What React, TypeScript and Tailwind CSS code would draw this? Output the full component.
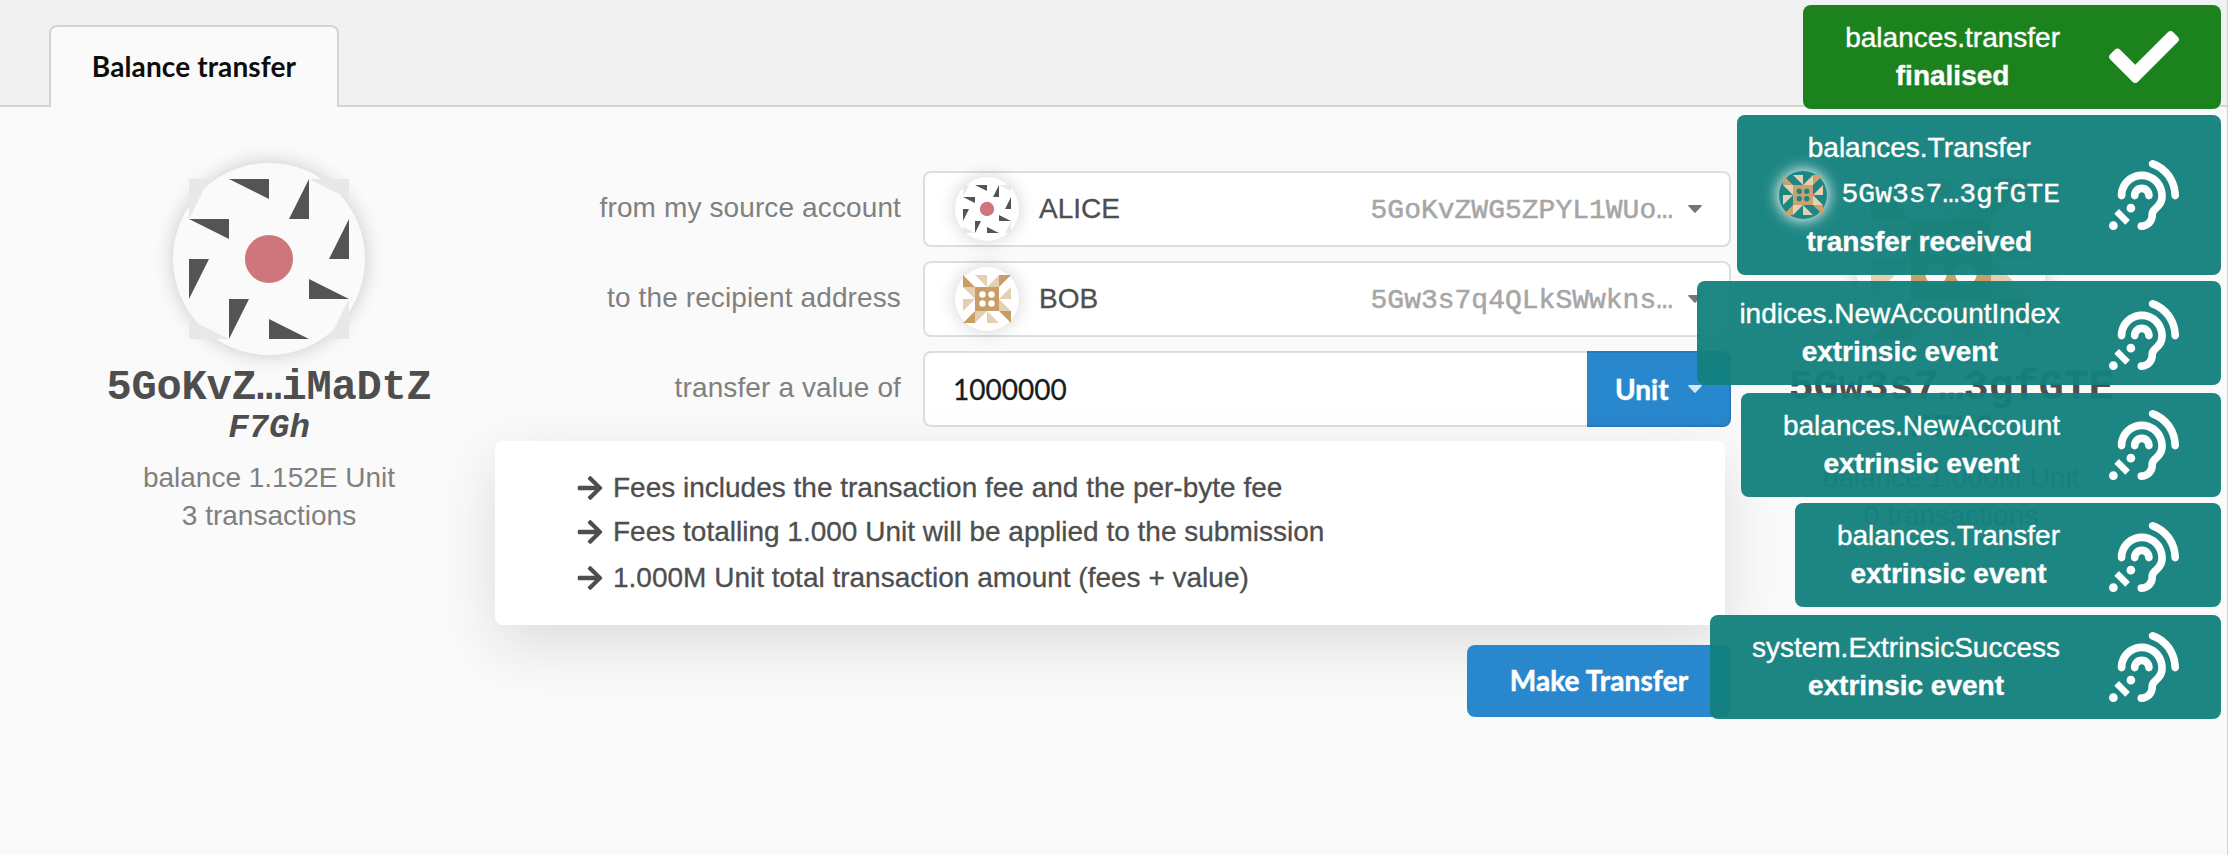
import React from "react";
import { FaArrowRight, FaAssistiveListeningSystems, FaCheck } from "react-icons/fa";

const SANS = "font-['Liberation_Sans',Arial,sans-serif]";
const MONO = "font-['Liberation_Mono','Courier_New',monospace]";
const LATO = "font-['Lato',sans-serif]";

function AliceGlyph({ className }: { className: string }) {
  return (
    <svg viewBox="0 0 160 160" className={className}>
      <path
        fill="#e8e8e8"
        d="M0 0H20L0 40ZM120 0H160V20ZM160 120V160H140ZM40 160H0V140Z"
      />
      <path
        fill="#545454"
        d="M40 0H80V20ZM120 0V40H100ZM0 40H40V60ZM160 40V80H140ZM0 80H20L0 120ZM120 100L160 120H120ZM40 120H60L40 160ZM80 140L120 160H80Z"
      />
      <circle cx="80" cy="80" r="24" fill="#cf767d" />
    </svg>
  );
}

function BobGlyph({ className }: { className: string }) {
  return (
    <svg viewBox="0 0 48 48" className={className}>
      <path
        fill="#e5ceb2"
        d="M12 0H24V12ZM48 12V24H36ZM36 48H24V36ZM0 36V24H12ZM24 12L36 0V12ZM36 24L48 36H36ZM24 36L12 48V36ZM12 24L0 12H12Z"
      />
      <path
        fill="#c99d66"
        fillRule="evenodd"
        d="M36 0H48L36 12ZM48 36V48L36 36ZM12 48H0L12 36ZM0 12V0L12 12ZM12 12H36V36H12ZM16.3 19.5a3.2 3.2 0 1 0 6.4 0a3.2 3.2 0 1 0 -6.4 0ZM25.3 19.5a3.2 3.2 0 1 0 6.4 0a3.2 3.2 0 1 0 -6.4 0ZM16.3 28.5a3.2 3.2 0 1 0 6.4 0a3.2 3.2 0 1 0 -6.4 0ZM25.3 28.5a3.2 3.2 0 1 0 6.4 0a3.2 3.2 0 1 0 -6.4 0Z"
      />
    </svg>
  );
}

function Caret({ className }: { className: string }) {
  return (
    <svg viewBox="0 0 14 8" className={className}>
      <path fill="currentColor" d="M1 0H13Q14.4 .2 13.5 1.2L7.7 7.6Q7 8.2 6.3 7.6L.5 1.2Q-.4 .2 1 0Z" />
    </svg>
  );
}

interface SummaryProps {
  glyph: React.ReactNode;
  address: string;
  index: string;
  balance: string;
  count: string;
}

function AddressSummary({ glyph, address, index, balance, count }: SummaryProps) {
  return (
    <div className="flex flex-col items-center pt-14">
      <div className="flex size-48 items-center justify-center rounded-full shadow-[0_0_20px_rgba(0,0,0,0.2)]">
        {glyph}
      </div>
      <div className={`mt-3 text-[42px] leading-[42px] font-bold tracking-[-0.2px] text-[#4e4e4e] ${MONO}`}>{address}</div>
      <div className={`text-[34px] leading-[38px] font-bold text-[#4e4e4e] italic ${MONO}`}>{index}</div>
      <div className="mt-3 text-center leading-[38px] text-[#808080]">
        <div>{balance}</div>
        <div>{count}</div>
      </div>
    </div>
  );
}

function Row({ label, children }: { label: string; children: React.ReactNode }) {
  return (
    <div className="flex h-[76px] gap-[22px]">
      <div className="flex w-[406px] items-center justify-end pb-[3px] tracking-[0.12px] whitespace-nowrap text-[#808080]">
        {label}
      </div>
      {children}
    </div>
  );
}

function AccountSelect({ glyph, name, address }: { glyph: React.ReactNode; name: string; address: string }) {
  return (
    <div className="flex w-[808px] items-center rounded-lg border-2 border-[#dededf] bg-white pr-[27px] pl-[30px]">
      <div className="flex size-16 items-center justify-center rounded-full shadow-[0_0_18px_rgba(0,0,0,0.18)]">
        {glyph}
      </div>
      <div className="ml-5 flex-1 text-[#4e4e4e] [-webkit-text-stroke:0.3px]">{name}</div>
      <div className={`mt-[3px] mr-[15px] leading-[28px] text-[#a6a6a6] [-webkit-text-stroke:0.5px] ${MONO}`}>{address}</div>
      <Caret className="h-2 w-[14px] text-[#767676]" />
    </div>
  );
}

interface ToastProps {
  title: string;
  status: string;
  tone: string;
  icon: React.ReactNode;
  children?: React.ReactNode;
}

function Toast({ title, status, tone, icon, children }: ToastProps) {
  return (
    <div className={`flex items-center rounded-lg px-[42px] text-white ${tone}`}>
      <div className="mr-[49px] text-center leading-[38px] whitespace-nowrap [-webkit-text-stroke:0.4px]">
        <div>{title}</div>
        {children}
        <div className="font-bold">{status}</div>
      </div>
      {icon}
    </div>
  );
}

const TEAL = "bg-[#12807d]";
const ear = <FaAssistiveListeningSystems className="size-[70px]" />;
const earLow = <FaAssistiveListeningSystems className="mt-1 size-[70px]" />;

export default function App() {
  return (
    <div className={`relative flex h-[855px] w-[2228px] flex-col overflow-hidden border-r border-[#d0d0d0] bg-[#fafafa] text-[28px] ${SANS}`}>
      <header className="flex h-[107px] items-end border-b-2 border-[#d4d4d5] bg-[#f1f1f1] pl-[49px]">
        <div
          className={`-mb-[2px] flex h-[82px] w-[290px] items-center justify-center rounded-t-lg border-2 border-b-0 border-[#d4d4d5] bg-[#fafafa] font-bold tracking-[0.12px] text-[#0d0d0d] ${LATO}`}
        >
          <span className="mb-[3px]">Balance transfer</span>
        </div>
      </header>

      <main className="grid grid-cols-[452px_1236px_440px] pl-[43px]">
        <AddressSummary
          glyph={<AliceGlyph className="size-40" />}
          address="5GoKvZ…iMaDtZ"
          index="F7Gh"
          balance="balance 1.152E Unit"
          count="3 transactions"
        />

        <div className="flex flex-col gap-[14px] pt-16">
          <Row label="from my source account">
            <AccountSelect glyph={<AliceGlyph className="size-12" />} name="ALICE" address="5GoKvZWG5ZPYL1WUo…" />
          </Row>
          <Row label="to the recipient address">
            <AccountSelect glyph={<BobGlyph className="size-12" />} name="BOB" address="5Gw3s7q4QLkSWwkns…" />
          </Row>
          <Row label="transfer a value of">
            <div className={`flex w-[808px] ${LATO}`}>
              <div className="flex flex-1 items-center rounded-l-lg border-2 border-r-0 border-[#dededf] bg-white pb-px pl-7 text-[#1b1c1d] [-webkit-text-stroke:0.3px]">
                1000000
              </div>
              <div className="flex w-36 items-center justify-between rounded-r-lg border-2 border-l-0 border-[#2679ba] bg-[#2987cd] pr-[27px] pl-7 font-bold text-white">
                <span className="pb-px [-webkit-text-stroke:0.5px]">Unit</span>
                <Caret className="h-2 w-[14px] text-[#d4e7f5]" />
              </div>
            </div>
          </Row>

          <div className="h-[184px] w-[1230px] rounded-lg bg-white pt-6 pl-[81px] leading-[45px] text-[#4e4e4e] shadow-[0_20px_60px_rgba(0,0,0,0.12)] [-webkit-text-stroke:0.3px]">
            {[
              "Fees includes the transaction fee and the per-byte fee",
              "Fees totalling 1.000 Unit will be applied to the submission",
              "1.000M Unit total transaction amount (fees + value)",
            ].map((line) => (
              <div key={line} className="flex items-center gap-[9px] even:-mt-px even:mb-px">
                <FaArrowRight className="size-7" />
                <span>{line}</span>
              </div>
            ))}
          </div>

          <div
            className={`relative mt-[6px] flex h-[72px] w-[264px] items-center justify-center self-end rounded-lg bg-[#2987cd] pb-[2px] font-bold tracking-[0.12px] text-white [-webkit-text-stroke:0.5px] ${LATO}`}
          >
            Make Transfer
          </div>
        </div>

        <AddressSummary
          glyph={<BobGlyph className="size-40" />}
          address="5Gw3s7…3gfGTE"
          index="F7L6"
          balance="balance 1.000M Unit"
          count="0 transactions"
        />
      </main>

      <div className="absolute top-[5px] right-[6px] flex flex-col items-end opacity-95">
        <Toast
          title="balances.transfer"
          status="finalised"
          tone="h-[104px] bg-[#107d13]"
          icon={<FaCheck className="size-[70px]" />}
        />
        <Toast title="balances.Transfer" status="transfer received" tone={`mt-[6px] h-[160px] ${TEAL}`} icon={ear}>
          <div className={`flex h-14 items-center ${MONO}`}>
            <div className="mr-[15px] flex size-12 items-center justify-center rounded-full bg-[#12807d] shadow-[0_0_14px_2px_rgba(255,255,255,0.9)]">
              <BobGlyph className="size-10" />
            </div>
            5Gw3s7…3gfGTE
          </div>
        </Toast>
        <Toast title="indices.NewAccountIndex" status="extrinsic event" tone={`mt-[6px] h-[104px] ${TEAL}`} icon={earLow} />
        <Toast title="balances.NewAccount" status="extrinsic event" tone={`mt-2 h-[104px] ${TEAL}`} icon={ear} />
        <Toast title="balances.Transfer" status="extrinsic event" tone={`mt-[6px] h-[104px] ${TEAL}`} icon={earLow} />
        <Toast title="system.ExtrinsicSuccess" status="extrinsic event" tone={`mt-2 h-[104px] ${TEAL}`} icon={ear} />
      </div>
    </div>
  );
}
